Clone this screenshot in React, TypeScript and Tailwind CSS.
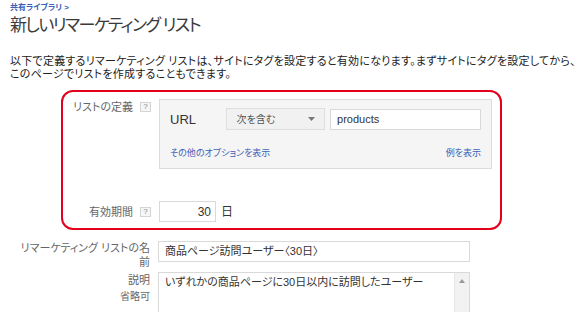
const FONT =
  "font-['Liberation_Sans','Noto_Sans_CJK_JP',sans-serif] [font-feature-settings:'palt']";

function HelpIcon() {
  return (
    <span className="mt-[1px] flex h-[10px] w-[11px] shrink-0 items-center justify-center border border-[#d4d4d4] bg-[#f6f6f6] text-[8px] leading-none text-[#888]">
      ?
    </span>
  );
}

function BoxLabel({ text }: { text: string }) {
  return (
    <div className="flex w-[88px] shrink-0 justify-end gap-[7px] text-[11px] leading-[13px] text-[#666]">
      <span>{text}</span>
      <HelpIcon />
    </div>
  );
}

export default function App() {
  return (
    <div className={`h-[312px] w-[580px] overflow-hidden bg-white text-[#222] ${FONT}`}>
      <div className="pl-[10px] pt-[3px]">
        <a href="#" className="block text-[8px] font-bold leading-[10px] text-[#3b62b8]">
          共有ライブラリ &gt;
        </a>
        <h1 className="mt-[2px] text-[17px] leading-[21px] tracking-[-1.6px] text-[#3a3a3a]">
          新しいリマーケティング リスト
        </h1>
        <p className="mt-[19px] whitespace-nowrap text-[11px] leading-[13px] tracking-[0.25px] text-[#222]">
          以下で定義するリマーケティング リストは、サイトにタグを設定すると有効になります。まずサイトにタグを設定してから、
          <br />
          このページでリストを作成することもできます。
        </p>
      </div>

      <div className="ml-[61px] mt-[9px] h-[140px] w-[441px] rounded-[12px] border-2 border-[#e2001a] pt-[7px]">
        <div className="flex items-start">
          <div className="pt-[2px]">
            <BoxLabel text="リストの定義" />
          </div>
          <div className="ml-[8px] h-[70px] w-[333px] border border-[#dcdcdc] bg-[#f5f5f5] px-[10px] pt-[8px]">
            <div className="flex items-center">
              <span className="w-[56px] text-[13px] leading-[15px] text-[#333]">URL</span>
              <div className="flex h-[22px] w-[100px] items-center justify-between border border-[#dedede] bg-[#f1f1f1] pl-[10px] pr-[9px] text-[10px] text-[#555]">
                <span>次を含む</span>
                <svg width="7" height="4" viewBox="0 0 7 4">
                  <path d="M0 0h7L3.5 4z" fill="#777" />
                </svg>
              </div>
              <div className="ml-[5px] flex h-[21px] w-[152px] items-center border border-[#d9d9d9] bg-white pl-[6px] text-[11px] text-[#333]">
                products
              </div>
            </div>
            <div className="mt-[18px] flex justify-between text-[9px] leading-[11px] text-[#3b62b8]">
              <a href="#">その他のオプションを表示</a>
              <a href="#">例を表示</a>
            </div>
          </div>
        </div>

        <div className="mt-[32px] flex items-center">
          <div className="pt-[1px]">
            <BoxLabel text="有効期間" />
          </div>
          <div className="ml-[8px] flex h-[21px] w-[57px] items-center justify-end border border-[#d9d9d9] bg-white pr-[4px] text-[12px] text-[#333]">
            30
          </div>
          <span className="ml-[5px] text-[12px] text-[#333]">日</span>
        </div>
      </div>

      <div className="mt-[11px] flex items-start">
        <div className="w-[150px] shrink-0 text-right text-[11px] leading-[14px] text-[#666]">
          リマーケティング リストの名
          <br />
          前
        </div>
        <div className="ml-[8px] flex h-[21px] w-[312px] items-center border border-[#d9d9d9] bg-white pl-[6px] text-[11px] text-[#333]">
          商品ページ訪問ユーザー〈30日〉
        </div>
      </div>

      <div className="mt-[3px] flex items-start">
        <div className="flex w-[150px] shrink-0 flex-col items-end pt-[2px] text-[#666]">
          <span className="text-[11px] leading-[13px]">説明</span>
          <span className="mt-[4px] text-[10px] leading-[12px] text-[#666]">省略可</span>
        </div>
        <div className="ml-[8px] flex h-[60px] w-[312px] border border-[#d9d9d9] bg-white">
          <div className="flex-1 pl-[6px] pt-[2px] text-[11px] leading-[14px] text-[#333]">
            いずれかの商品ページに30日以内に訪問したユーザー
          </div>
          <div className="flex w-[15px] flex-col items-center border-l border-[#e6e6e6] bg-[#f2f2f2] pt-[6px]">
            <svg width="6" height="4" viewBox="0 0 6 4">
              <path d="M3 0l3 4H0z" fill="#999" />
            </svg>
          </div>
        </div>
      </div>
    </div>
  );
}
